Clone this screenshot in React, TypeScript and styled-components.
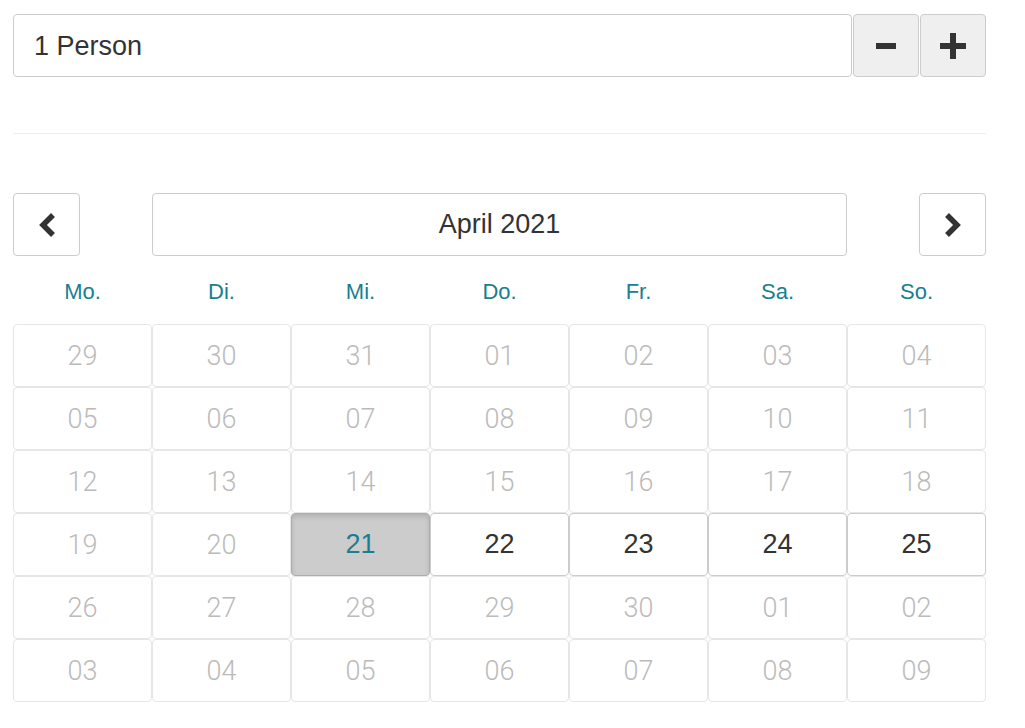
import React, { useState } from 'react';
import styled, { createGlobalStyle, css } from 'styled-components';

const GlobalStyle = createGlobalStyle`
  body {
    margin: 0;
    background: #fff;
    font-family: "Liberation Sans", Arial, sans-serif;
    color: #333;
  }
`;

type Day = {
  label: string;
  state: 'off' | 'on' | 'selected';
};

const weekdays = ['Mo.', 'Di.', 'Mi.', 'Do.', 'Fr.', 'Sa.', 'So.'];

const pad = (n: number) => (n < 10 ? `0${n}` : `${n}`);

function buildDays(): Day[] {
  const days: Day[] = [];
  [29, 30, 31].forEach((d) => days.push({ label: pad(d), state: 'off' }));
  for (let d = 1; d <= 30; d++) {
    let state: Day['state'] = 'off';
    if (d === 21) state = 'selected';
    else if (d >= 22 && d <= 25) state = 'on';
    days.push({ label: pad(d), state });
  }
  for (let d = 1; d <= 9; d++) days.push({ label: pad(d), state: 'off' });
  return days;
}

export default function App() {
  const [persons, setPersons] = useState(1);
  const days = buildDays();

  return (
    <>
      <GlobalStyle />
      <Page>
        <CounterRow>
          <CountInput>{persons} Person</CountInput>
          <StepButton onClick={() => setPersons((p) => Math.max(1, p - 1))}>
            <svg width="22" height="22" viewBox="0 0 22 22">
              <rect x="1" y="8" width="20" height="6" fill="#333" />
            </svg>
          </StepButton>
          <StepButton onClick={() => setPersons((p) => p + 1)}>
            <svg width="26" height="26" viewBox="0 0 26 26">
              <rect x="0" y="10" width="26" height="6" fill="#333" />
              <rect x="10" y="0" width="6" height="26" fill="#333" />
            </svg>
          </StepButton>
        </CounterRow>

        <Divider />

        <NavRow>
          <NavButton>
            <svg width="20" height="26" viewBox="0 0 20 26">
              <path d="M16 3 L6 13 L16 23" fill="none" stroke="#333" strokeWidth="5.5" strokeLinejoin="miter" />
            </svg>
          </NavButton>
          <MonthLabel>April 2021</MonthLabel>
          <NavButton $right>
            <svg width="20" height="26" viewBox="0 0 20 26">
              <path d="M4 3 L14 13 L4 23" fill="none" stroke="#333" strokeWidth="5.5" strokeLinejoin="miter" />
            </svg>
          </NavButton>
        </NavRow>

        <Grid>
          {weekdays.map((w) => (
            <Weekday key={w}>{w}</Weekday>
          ))}
          {days.map((d, i) => (
            <DayCell key={i} $state={d.state}>
              {d.label}
            </DayCell>
          ))}
        </Grid>
      </Page>
    </>
  );
}

const Page = styled.div`
  width: 973px;
  padding: 14px 0 0 13px;
`;

const CounterRow = styled.div`
  display: flex;
  gap: 1px;
  height: 63px;
`;

const CountInput = styled.div`
  flex: 1;
  box-sizing: border-box;
  border: 1px solid #ccc;
  border-radius: 4px;
  display: flex;
  align-items: center;
  padding: 2px 0 0 20px;
  font-size: 27px;
  color: #333;
`;

const StepButton = styled.button`
  width: 66px;
  box-sizing: border-box;
  border: 1px solid #ccc;
  border-radius: 4px;
  background: #efefef;
  display: flex;
  align-items: center;
  justify-content: center;
  padding: 0;
  cursor: pointer;
`;

const Divider = styled.hr`
  border: 0;
  border-top: 1px solid #eee;
  margin: 56px 0 59px;
`;

const NavRow = styled.div`
  display: grid;
  grid-template-columns: repeat(7, 139px);
  height: 63px;
`;

const NavButton = styled.button<{ $right?: boolean }>`
  width: 67px;
  height: 63px;
  box-sizing: border-box;
  border: 1px solid #ccc;
  border-radius: 4px;
  background: #fff;
  display: flex;
  align-items: center;
  justify-content: center;
  padding: 0;
  cursor: pointer;
  ${(p) =>
    p.$right &&
    css`
      grid-column: 7;
      justify-self: end;
    `}
`;

const MonthLabel = styled.div`
  grid-column: 2 / 7;
  box-sizing: border-box;
  border: 1px solid #ccc;
  border-radius: 4px;
  display: flex;
  align-items: center;
  justify-content: center;
  font-size: 27px;
  color: #333;
`;

const Grid = styled.div`
  display: grid;
  grid-template-columns: repeat(7, 139px);
  grid-template-rows: 68px repeat(6, 63px);
`;

const Weekday = styled.div`
  display: flex;
  align-items: center;
  justify-content: center;
  padding-top: 4px;
  font-size: 22px;
  color: #177f91;
`;

const DayCell = styled.div<{ $state: 'off' | 'on' | 'selected' }>`
  box-sizing: border-box;
  border: 1px solid #e6e6e6;
  border-radius: 4px;
  display: flex;
  align-items: center;
  justify-content: center;
  font-size: 27px;
  color: #bbb;
  font-family: Roboto, "Liberation Sans", sans-serif;
  font-weight: 300;
  ${(p) =>
    p.$state === 'on' &&
    css`
      border-color: #ccc;
      color: #333;
      font-family: "Liberation Sans", Arial, sans-serif;
      font-weight: 400;
      cursor: pointer;
    `}
  ${(p) =>
    p.$state === 'selected' &&
    css`
      border-color: #adadad;
      background: #ccc;
      box-shadow: inset 0 3px 5px rgba(0, 0, 0, 0.125);
      color: #177f91;
      font-family: "Liberation Sans", Arial, sans-serif;
      font-weight: 400;
    `}
`;
